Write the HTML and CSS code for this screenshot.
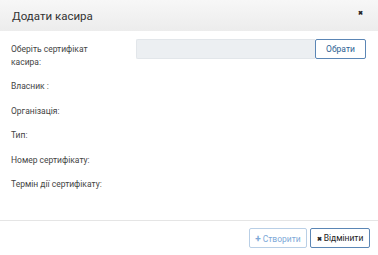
FILE: index.html
```html
<!DOCTYPE html>
<html lang="uk">
<head>
    <meta charset="UTF-8">
    <title>Додати касира</title>
    <link rel="stylesheet" href="styles.css">
</head>
<body>
    <div class="modal">
        <div class="modal-header">
            <h4 class="modal-title">Додати касира</h4>
            <span class="close">&#10006;</span>
        </div>
        <div class="modal-body">
            <div class="form-row">
                <label class="form-label">Оберіть сертифікат касира:</label>
                <div class="input-group">
                    <input class="form-input" type="text" disabled>
                    <button class="btn btn-choose">Обрати</button>
                </div>
            </div>
            <p class="info-item">Власник :</p>
            <p class="info-item">Організація:</p>
            <p class="info-item">Тип:</p>
            <p class="info-item">Номер сертифікату:</p>
            <p class="info-item">Термін дії сертифікату:</p>
        </div>
        <div class="modal-footer">
            <button class="btn btn-create" disabled><span class="icon">+</span>Створити</button>
            <button class="btn btn-cancel"><span class="icon">&#10006;</span>Відмінити</button>
        </div>
    </div>
</body>
</html>
```

FILE: styles.css
```css
body {
    font-family: Roboto, "Liberation Sans", sans-serif;
    background-color: #fff;
    margin: 0;
    padding: 0;
    color: #444;
}
.modal {
    width: 378px;
    height: 255px;
    background-color: #fff;
}
.modal-header {
    height: 31px;
    box-sizing: border-box;
    padding: 0 12px;
    display: flex;
    align-items: center;
    justify-content: space-between;
    background: linear-gradient(to bottom, #f7f7f7, #ececec);
}
.modal-title {
    margin: 0;
    font-size: 11.5px;
    font-weight: normal;
    color: #333;
}
.close {
    font-size: 6px;
    font-weight: bold;
    color: #222;
    margin-right: 3px;
    margin-top: -7px;
}
.modal-body {
    padding: 8px 12px 0 11px;
    height: 190px;
    box-sizing: border-box;
    border-bottom: 1px solid #e5e5e5;
}
.form-row {
    display: flex;
    align-items: flex-start;
}
.form-label {
    flex-shrink: 0;
    width: 125px;
    font-size: 8.5px;
    line-height: 13px;
    padding-top: 3.5px;
    padding-right: 20px;
    box-sizing: border-box;
}
.input-group {
    display: flex;
    flex: 1;
    min-width: 0;
}
.form-input {
    flex: 1;
    min-width: 0;
    height: 20px;
    box-sizing: border-box;
    border: 1px solid #e2e6ea;
    border-right: none;
    border-radius: 2px 0 0 2px;
    background-color: #eceff2;
    margin: 0;
}
.btn {
    font-family: Roboto, "Liberation Sans", sans-serif;
    font-size: 8.5px;
    height: 20px;
    box-sizing: border-box;
    background-color: #fff;
    border-radius: 2px;
    padding: 0;
    margin: 0;
    cursor: pointer;
}
.btn-choose {
    flex-shrink: 0;
    border: 1px solid #5b86b5;
    color: #2d5f93;
    width: 51px;
}
.info-item {
    font-size: 8.5px;
    margin: 0;
    line-height: 12px;
    margin-top: 12.5px;
}
.form-row + .info-item {
    margin-top: 11.5px;
}
.modal-footer {
    display: flex;
    justify-content: flex-end;
    gap: 3px;
    padding: 7px 8px 0 0;
}
.btn-create {
    border: 1px solid #b9cfe6;
    color: #7ea9d8;
    width: 58px;
}
.btn-cancel {
    border: 1px solid #5b86b5;
    color: #222;
    width: 60px;
}
.icon {
    margin-right: 2px;
    font-weight: bold;
}
.btn-create .icon {
    font-size: 10px;
}
.btn-cancel .icon {
    font-size: 6px;
}
```
